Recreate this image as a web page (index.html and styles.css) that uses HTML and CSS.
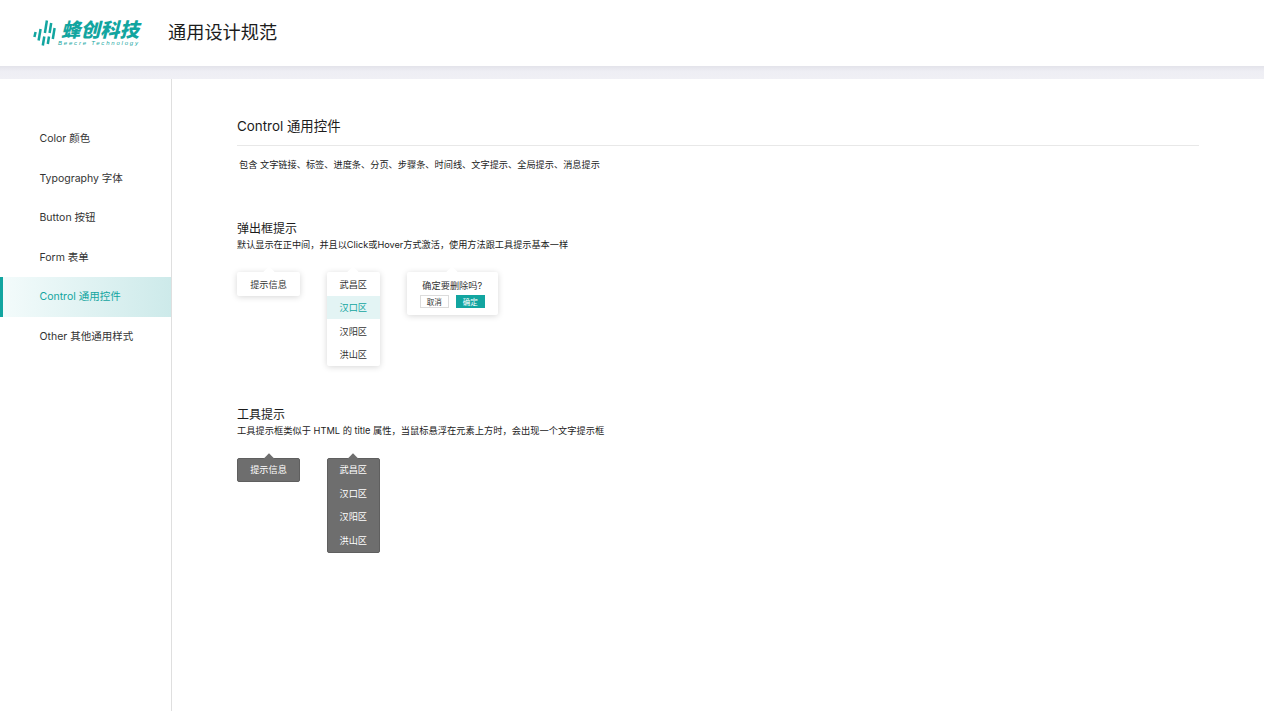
FILE: index.html
```html
<!DOCTYPE html>
<html lang="zh-CN">
<head>
<meta charset="utf-8">
<title>通用设计规范</title>
<link rel="stylesheet" href="styles.css">
</head>
<body>
<header class="header">
  <div class="logo">
    <svg class="logo-mark" width="24" height="26" viewBox="0 0 24 26" aria-hidden="true">
      <g fill="none" stroke="#12a5a0" stroke-width="2.5">
        <path d="M1.4 17 L2.6 12"/>
        <path d="M5.6 20.5 L7.6 9"/>
        <path d="M9.8 25.5 L11.3 16.5"/>
        <path d="M11.9 13 L13.9 0.5"/>
        <path d="M14.8 24 L16 16.5"/>
        <path d="M16.6 13 L18.2 3"/>
        <path d="M19.8 19 L21.6 8"/>
      </g>
    </svg>
    <div class="logo-text">
      <div class="logo-cn">蜂创科技</div>
      <div class="logo-en">Beecre Technology</div>
    </div>
  </div>
  <div class="header-title">通用设计规范</div>
</header>
<div class="band"></div>
<div class="layout">
  <nav class="sidebar">
    <a class="nav-item">Color 颜色</a>
    <a class="nav-item">Typography 字体</a>
    <a class="nav-item">Button 按钮</a>
    <a class="nav-item">Form 表单</a>
    <a class="nav-item active">Control 通用控件</a>
    <a class="nav-item">Other 其他通用样式</a>
  </nav>
  <main class="main">
    <h1 class="page-title">Control 通用控件</h1>
    <p class="page-desc">包含 文字链接、标签、进度条、分页、步骤条、时间线、文字提示、全局提示、消息提示</p>

    <section class="section section-pop">
      <h2 class="section-title">弹出框提示</h2>
      <p class="section-desc">默认显示在正中间，并且以Click或Hover方式激活，使用方法跟工具提示基本一样</p>
      <div class="demo">
        <div class="bubble light tip">提示信息</div>
        <ul class="bubble light list">
          <li>武昌区</li>
          <li class="selected">汉口区</li>
          <li>汉阳区</li>
          <li>洪山区</li>
        </ul>
        <div class="bubble light confirm">
          <div class="confirm-text">确定要删除吗?</div>
          <div class="confirm-actions">
            <span class="btn">取消</span>
            <span class="btn primary">确定</span>
          </div>
        </div>
      </div>
    </section>

    <section class="section section-tip">
      <h2 class="section-title">工具提示</h2>
      <p class="section-desc">工具提示框类似于 HTML 的 title 属性，当鼠标悬浮在元素上方时，会出现一个文字提示框</p>
      <div class="demo">
        <div class="bubble dark tip">提示信息</div>
        <ul class="bubble dark list">
          <li>武昌区</li>
          <li>汉口区</li>
          <li>汉阳区</li>
          <li>洪山区</li>
        </ul>
      </div>
    </section>
  </main>
</div>
</body>
</html>
```
FILE: styles.css
```css
* { box-sizing: border-box; }
html, body { margin: 0; padding: 0; height: 100%; overflow: hidden; background: #fff; }
body {
  font-family: Inter, "Noto Sans CJK SC", sans-serif;
  color: #222;
  display: flex;
  flex-direction: column;
}
.header {
  height: 66px;
  flex: none;
  display: flex;
  align-items: center;
  background: #fff;
  padding-left: 33px;
  padding-bottom: 5px;
}
.logo { display: flex; align-items: center; width: 135px; gap: 4px; margin-top: 5px; }
.logo-mark { flex: none; }
.logo-text { color: #12a5a0; }
.logo-cn {
  font-family: "Noto Sans CJK SC", sans-serif;
  font-size: 19.5px;
  line-height: 18px;
  font-weight: 900;
  font-style: italic;
  white-space: nowrap;
}
.logo-en {
  font-family: "Liberation Sans", sans-serif;
  font-size: 6px;
  line-height: 7px;
  margin-top: 2px;
  letter-spacing: 1.8px;
  font-style: italic;
  white-space: nowrap;
  margin-left: -3px;
}
.header-title {
  font-family: "Noto Sans CJK SC", sans-serif;
  font-size: 18.2px;
  color: #1c1c1c;
}
.band {
  height: 13px;
  flex: none;
  background: linear-gradient(#e3e3ea, #eeeef4 40%, #f0f0f5);
}
.layout { flex: 1; display: flex; min-height: 0; }
.sidebar {
  width: 172px;
  flex: none;
  border-right: 1px solid #dfdfdf;
  padding-top: 40px;
}
.nav-item {
  display: flex;
  align-items: center;
  height: 39.5px;
  padding-left: 39.5px;
  padding-bottom: 2.5px;
  font-size: 10.5px;
  color: #333;
  white-space: nowrap;
}
.nav-item.active {
  color: #12a5a0;
  border-left: 3px solid #12a5a0;
  padding-left: 36.5px;
  background: linear-gradient(90deg, #f3fbfb, #cdeaea);
}
.main { flex: 1; padding: 40px 65px 0; min-width: 0; }
.page-title {
  margin: 0;
  font-size: 13.4px;
  line-height: 15px;
  font-weight: 400;
  color: #1c1c1c;
  height: 27px;
  border-bottom: 1px solid #e8e8e8;
  width: 962px;
}
.page-desc {
  margin: 12px 0 0 2px;
  font-size: 9.2px;
  line-height: 13px;
  color: #222;
}
.section-title {
  margin: 0;
  font-size: 12px;
  line-height: 16px;
  font-weight: 400;
  color: #1c1c1c;
}
.section-desc {
  margin: 1px 0 0;
  font-size: 9.25px;
  line-height: 13px;
  color: #222;
}
.section-pop .section-desc { font-size: 9.17px; }
.section-pop { margin-top: 50px; height: 186px; }
.demo { display: flex; align-items: flex-start; margin-top: 21px; }
.bubble {
  position: relative;
  font-size: 9.2px;
  border-radius: 2px;
  margin: 0;
  padding: 0;
  list-style: none;
}
.bubble::before {
  content: "";
  position: absolute;
  top: -4px;
  left: 50%;
  margin-left: -4px;
  width: 8px;
  height: 8px;
  transform: rotate(45deg);
  background: inherit;
}
.bubble.light {
  background: #fff;
  color: #333;
  box-shadow: 0 1px 6px rgba(0, 0, 0, 0.16);
}
.bubble.dark {
  background: #6e6e6e;
  color: #fff;
  border: 1px solid #5f5f5f;
}
.tip {
  width: 63px;
  height: 23.5px;
  display: flex;
  align-items: center;
  justify-content: center;
  margin-right: 26.5px;
}
.dark.tip { padding-bottom: 1.5px; }
.list { width: 53.5px; margin-right: 27px; }
.list li {
  position: relative;
  height: 23.5px;
  display: flex;
  align-items: center;
  justify-content: center;
}
.list li.selected { background: #e3f4f4; color: #12a5a0; }
.dark.list li { margin: 0 -1px; }
.dark.list li:first-child { margin-top: -1.5px; }
.confirm { width: 90.5px; height: 43px; padding-top: 6.5px; }
.confirm-text { position: relative; text-align: center; line-height: 13px; color: #333; }
.confirm-actions {
  position: relative;
  display: flex;
  gap: 7px;
  justify-content: center;
  margin-top: 3px;
}
.btn {
  width: 29px;
  height: 13px;
  display: flex;
  align-items: center;
  justify-content: center;
  font-size: 7.5px;
  border: 1px solid #dcdcdc;
  color: #333;
  background: #fff;
}
.btn.primary { background: #12a5a0; border-color: #12a5a0; color: #fff; }
```
